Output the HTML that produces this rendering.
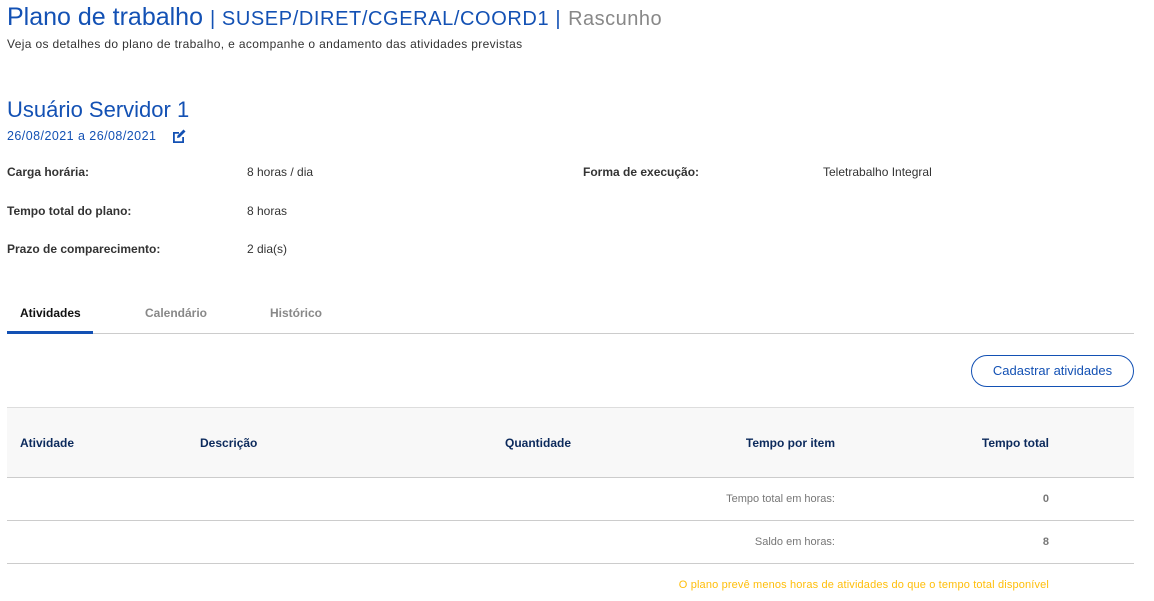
<!DOCTYPE html>
<html><head><meta charset="utf-8"><style>
*{margin:0;padding:0;box-sizing:border-box}
body{width:1154px;height:601px;background:#fff;font-family:"Liberation Sans",Arial,sans-serif;position:relative;overflow:hidden;color:#333}
.a{position:absolute;white-space:nowrap}
.lbl{font-size:12px;font-weight:bold;color:#333}
.val{font-size:12px;color:#333}
.th{font-size:12px;font-weight:bold;color:#0c2a5c}
.r{text-align:right}
</style></head><body>
<div class="a" style="left:7px;top:3px;font-size:25px;color:#1351b4;"><span>Plano de trabalho</span> <span style="font-size:20px;letter-spacing:0.6px">| SUSEP/DIRET/CGERAL/COORD1 |</span> <span style="font-size:20px;color:#888;letter-spacing:0.5px">Rascunho</span></div>
<div class="a" style="left:7px;top:37px;font-size:12px;color:#333;letter-spacing:0.35px">Veja os detalhes do plano de trabalho, e acompanhe o andamento das atividades previstas</div>
<div class="a" style="left:7px;top:97px;font-size:22px;color:#1351b4;">Usuário Servidor 1</div>
<div class="a" style="left:7px;top:129px;font-size:12.5px;color:#1351b4;letter-spacing:0.45px">26/08/2021 a 26/08/2021</div>
<svg class="a" style="left:172px;top:129px" width="15" height="14" viewBox="0 0 15 14"><path d="M1 3h6v1.8H2.8v7.4h7.4V8H12v6H1z" fill="#1351b4"/><path d="M5 9l.5-2.5L11.5.5l2 2-6 6z" fill="#1351b4"/></svg>
<div class="a lbl" style="left:7px;top:165px">Carga horária:</div>
<div class="a val" style="left:247px;top:165px">8 horas / dia</div>
<div class="a lbl" style="left:583px;top:165px">Forma de execução:</div>
<div class="a val" style="left:823px;top:165px">Teletrabalho Integral</div>
<div class="a lbl" style="left:7px;top:204px">Tempo total do plano:</div>
<div class="a val" style="left:247px;top:204px">8 horas</div>
<div class="a lbl" style="left:7px;top:242px">Prazo de comparecimento:</div>
<div class="a val" style="left:247px;top:242px">2 dia(s)</div>
<div class="a" style="left:20px;top:306px;font-size:12px;font-weight:bold;color:#111">Atividades</div>
<div class="a" style="left:145px;top:306px;font-size:12px;font-weight:bold;color:#888">Calendário</div>
<div class="a" style="left:270px;top:306px;font-size:12px;font-weight:bold;color:#888">Histórico</div>
<div class="a" style="left:7px;top:333px;width:1127px;height:1px;background:#ccc"></div>
<div class="a" style="left:7px;top:331px;width:86px;height:3px;background:#1351b4"></div>
<div class="a" style="left:971px;top:355px;width:163px;height:32px;border:1px solid #1351b4;border-radius:16px;font-size:13px;color:#1351b4;text-align:center;line-height:30px">Cadastrar atividades</div>
<div class="a" style="left:7px;top:407px;width:1127px;height:71px;background:#f8f8f8;border-top:1px solid #ddd;border-bottom:1px solid #ccc"></div>
<div class="a th" style="left:20px;top:436px">Atividade</div>
<div class="a th" style="left:200px;top:436px">Descrição</div>
<div class="a th" style="left:505px;top:436px">Quantidade</div>
<div class="a th r" style="right:319px;top:436px">Tempo por item</div>
<div class="a th r" style="right:105px;top:436px">Tempo total</div>
<div class="a r" style="right:319px;top:493px;font-size:11px;color:#777">Tempo total em horas:</div>
<div class="a r" style="right:105px;top:493px;font-size:11px;color:#777;font-weight:bold">0</div>
<div class="a" style="left:7px;top:520px;width:1127px;height:1px;background:#ccc"></div>
<div class="a r" style="right:319px;top:536px;font-size:11px;color:#777">Saldo em horas:</div>
<div class="a r" style="right:105px;top:536px;font-size:11px;color:#777;font-weight:bold">8</div>
<div class="a" style="left:7px;top:563px;width:1127px;height:1px;background:#ccc"></div>
<div class="a r" style="right:105px;top:579px;font-size:11px;color:#ffbe0a;letter-spacing:0.15px">O plano prevê menos horas de atividades do que o tempo total disponível</div>
</body></html>
